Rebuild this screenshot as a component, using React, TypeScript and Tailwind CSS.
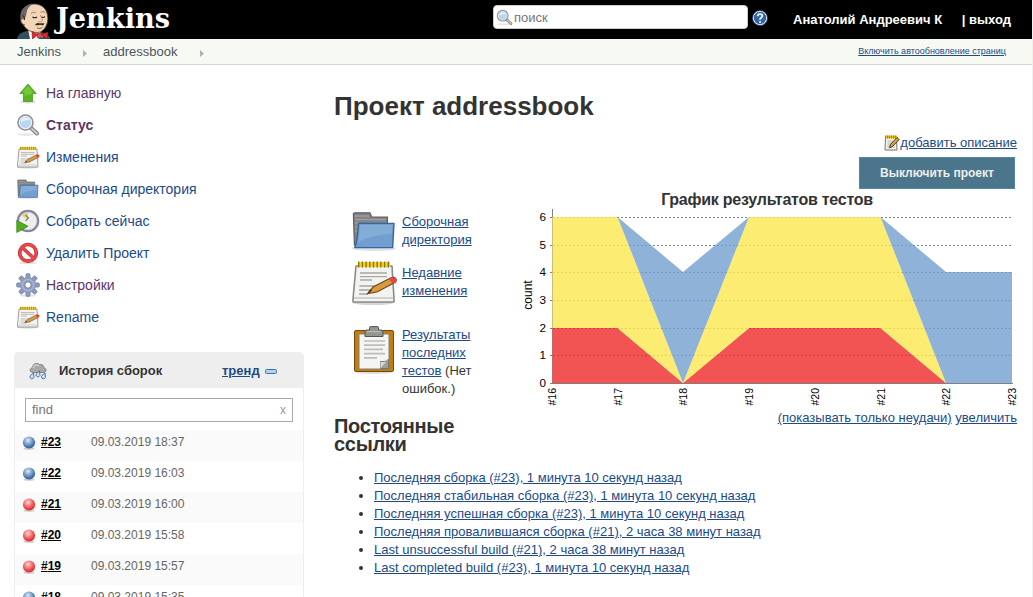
import React from "react";

const linkClass = "text-[#204a87] underline";

function Butler() {
  return (
    <svg width="34" height="36" viewBox="0 0 34 36" className="block">
      <path d="M0 36 C1 31 5 29 10 28 L26 29.500 C29 30.500 32 32 33.500 36Z" fill="#335061" />
      <path d="M11 26 L23 29 L26 34 L20 36 L13 36Z" fill="#f5f5f5" />
      <path d="M5 18 C3 7 9 1 17 1 C25 1 30 6 30.500 13 C32 19 28 29 21 29.500 C13 29.500 7 26 5 18Z" fill="#f0d6b7" stroke="#5b4a40" strokeWidth=".8" />
      <path d="M4 19 C2 12 4 5 10 2.500 C12 1.300 14 1 16 1 C12 3 10 6 9.500 10 C9.300 13 8 14 7.500 17 Z" fill="#6b6765" />
      <path d="M5.500 12 C7 13 8 15 7.500 17" fill="none" stroke="#222" strokeWidth="1" />
      <path d="M7 16 C2.500 14 3 21 8 22" fill="#f0d6b7" stroke="#6d5443" strokeWidth=".9" />
      <path d="M14 10.500 C15.500 9 17.500 9 19 10 M23.500 9.500 C25.500 8 27 8.500 28.500 10" fill="none" stroke="#8a6d58" strokeWidth=".8" />
      <path d="M15.500 14 C17 15 18.500 15 20 14 M24.500 13.800 C25.500 14.600 27 14.600 28 13.600" fill="none" stroke="#25201d" strokeWidth="1.100" />
      <path d="M23.500 12 C24.500 16 26.500 17 24.500 18.500 C23.500 19.500 22 19 21.500 18.500" fill="none" stroke="#b08462" strokeWidth=".9" />
      <path d="M18 22 C19.500 19.500 21.500 19.800 23 20.500 C25 19.800 26.500 20.600 27.500 20.400 C27 22.500 24.500 22.300 23 21.800 C21 22.500 19.500 22.500 18 22Z" fill="#3d2d23" />
      <path d="M20 24.700 C22 26 24.500 25.500 25.500 24.300" fill="none" stroke="#8b4c3a" strokeWidth=".9" />
      <path d="M15 28.500 L21 31.500 L15.500 36 Z M31 29 L24 31.500 L30.500 36 Z" fill="#e8252b" stroke="#7c1517" strokeWidth=".6" />
      <path d="M20.500 30.500 H24.500 L25 34.500 L20.500 34.500Z" fill="#f04a47" stroke="#7c1517" strokeWidth=".6" />
    </svg>
  );
}

function ArrowUp() {
  return (
    <svg width="24" height="24" viewBox="0 0 24 24">
      <ellipse cx="12" cy="20.800" rx="8" ry="1.600" fill="#ddd" />
      <path d="M12 3 L20.200 12.500 H16.500 V20.500 H7.500 V12.500 H3.800 Z" fill="#57b51f" stroke="#4a9c1c" strokeWidth=".8" />
      <path d="M12 4.800 L17.500 11.300 H15.500 V14 C12 13 10 14 8.500 16 V11.300 H6.200 Z" fill="#8bdc55" opacity=".5" />
    </svg>
  );
}

function Magnifier({ size = 24 }: { size?: number }) {
  return (
    <svg width={size} height={size} viewBox="0 0 24 24" className="block">
      <ellipse cx="10" cy="21.500" rx="9" ry="1.500" fill="#e8e8e8" />
      <path d="M15.500 15.500 L21 20.500" stroke="#777" strokeWidth="4" strokeLinecap="round" />
      <path d="M15.500 15.500 L21 20.500" stroke="#ccc" strokeWidth="2" strokeLinecap="round" />
      <circle cx="9.500" cy="9.500" r="7.200" fill="#b9d6f3" stroke="#8e8e8e" strokeWidth="2.200" />
      <circle cx="9.500" cy="9.500" r="6.200" fill="#b9d6f3" stroke="#f4f4f4" strokeWidth="1.100" />
      <path d="M5 9.500 C4.500 4.500 11.500 3 14 7.500 C10.500 7 7 7.500 5 9.500Z" fill="#e8f3fd" />
    </svg>
  );
}

function Notepad({ size = 24 }: { size?: number }) {
  return (
    <svg width={size} height={size} viewBox="0 0 24 24" className="block">
      <ellipse cx="11.500" cy="22.500" rx="10" ry="1" fill="#d5d5d5" />
      <path d="M3 4 H21 L22 20.500 V22 H1.500 V20.500 Z" fill="#f3f3f2" stroke="#8a8a86" strokeWidth=".8" strokeLinejoin="round" />
      <path d="M2 20 H21.600" stroke="#c5c5c2" strokeWidth=".8" />
      <path d="M5 7.500 H18.500 M5 9.300 H18.500 M5 11 H11 M4.700 14 H14 M4.500 16 H14 M4.500 18 H9" stroke="#a7a7a4" strokeWidth=".7" />
      <path d="M4 3.300 H20" stroke="#f4d42c" strokeWidth="2.600" />
      <path d="M4 3.300 H20" stroke="#8b7708" strokeWidth="3" strokeDasharray=".7 1.150" />
      <path d="M8.800 17.800 L11.500 14.500 L20.500 9.900 C22.700 9.300 23.700 10.500 22.800 12 L13.500 17 Z" fill="#d99b42" stroke="#744a16" strokeWidth=".6" />
      <path d="M20.500 9.900 C22.700 9.300 23.700 10.500 22.800 12 L21.300 12.900 L19.500 10.400Z" fill="#ec4545" />
      <path d="M8.800 17.800 L11.200 16.100 L9.900 16.100Z" fill="#222" />
    </svg>
  );
}

function Folder({ size = 24 }: { size?: number }) {
  return (
    <svg width={size} height={size} viewBox="0 0 24 24" className="block">
      <ellipse cx="12" cy="20.700" rx="11" ry="1.300" fill="#e2e2e2" />
      <path d="M1.700 3.600 Q1.700 2.900 2.400 2.900 H10 L10.800 5 H18.700 V19 H2.200 Z" fill="#858585" stroke="#5e5e5e" strokeWidth=".6" />
      <path d="M2.500 4.500 H9.500 M2.500 6.300 H18 M2.500 8 H4.500 M2.500 10 H4 M2.500 12 H3.800" stroke="#a5a5a5" strokeWidth=".5" />
      <path d="M4.300 8.200 H22 L21.300 20.300 H2.400 C3.500 18 4 12 4.300 8.200 Z" fill="#729fcf" stroke="#3465a4" strokeWidth=".7" strokeLinejoin="round" />
      <path d="M5 9 H21.200 L20.900 13.500 C14 13.500 8 15.500 4.200 17.500 Z" fill="#9abce1" opacity=".45" />
    </svg>
  );
}

function ClockPlay() {
  return (
    <svg width="24" height="24" viewBox="0 0 24 24">
      <circle cx="12" cy="12" r="10.200" fill="#eeeeea" stroke="#8383a0" strokeWidth="2.200" />
      <circle cx="12" cy="12" r="8.900" fill="none" stroke="#c4c4cd" strokeWidth=".7" />
      <path d="M12 11 L5.500 6.500 A8.500 8.500 0 0 1 12 3.500Z" fill="#ead27a" />
      <path d="M9.500 6 L12.500 9 L9.500 12" stroke="#444" strokeWidth="1" fill="none" />
      <path d="M.8 11.500 L12 17.300 L.8 23.500Z" fill="#4fae22" stroke="#368812" strokeWidth=".8" />
    </svg>
  );
}

function Forbidden() {
  return (
    <svg width="24" height="24" viewBox="0 0 24 24">
      <ellipse cx="12" cy="21.900" rx="9" ry="1.300" fill="#e0e0e0" />
      <circle cx="12" cy="11.800" r="8.300" fill="#fafafa" stroke="#c62828" strokeWidth="3.600" />
      <path d="M6.200 6.400 L17.800 17.200" stroke="#c62828" strokeWidth="3.400" />
      <circle cx="12" cy="11.800" r="8.300" fill="none" stroke="#e8484b" strokeWidth="2.400" />
      <path d="M6.200 6.400 L17.800 17.200" stroke="#e8484b" strokeWidth="2.300" />
    </svg>
  );
}

const gearTeeth = [0, 45, 90, 135, 180, 225, 270, 315];

function Gear() {
  return (
    <svg width="24" height="24" viewBox="0 0 24 24">
      <ellipse cx="12" cy="22.500" rx="8" ry="1.300" fill="#e2e2e2" />
      <g fill="#8d9bbd" stroke="#6c7ba3" strokeWidth=".7">
        {gearTeeth.map((a) => (
          <path key={a} d="M9.800 5.500 L10.100 1 Q12 0 13.900 1 L14.200 5.500Z" transform={`rotate(${a} 12 12)`} />
        ))}
        <circle cx="12" cy="12" r="8" stroke="none" />
      </g>
      <circle cx="12" cy="12" r="5.600" fill="none" stroke="#a9b5d0" strokeWidth="1.500" />
      <circle cx="12" cy="12" r="3.100" fill="#fff" stroke="#6c7ba3" strokeWidth=".8" />
    </svg>
  );
}

function Clipboard() {
  return (
    <svg width="48" height="48" viewBox="0 0 48 48" className="block">
      <ellipse cx="24" cy="46.500" rx="18" ry="1.500" fill="#ddd" />
      <rect x="4.500" y="4.500" width="39" height="41" rx="1.500" fill="#c17d11" stroke="#754a08" />
      <path d="M9 8 H39 V43 H9Z" fill="#f5f5f4" stroke="#85847d" />
      <path d="M14 15 H35 M14 19.200 H35 M14 23.400 H33 M14 27.600 H35 M14 31.800 H27" stroke="#bcbcb9" strokeWidth="1.700" />
      <path d="M30.500 42.500 V35.500 H33 C36 35.500 38 34.500 38.500 33 V42.500Z" fill="#9e9e9b" stroke="#666" strokeWidth=".8" />
      <path d="M30.500 42.500 L38.500 33 C38 35.500 36 36 30.500 36Z" fill="#d7d7d4" />
      <path d="M15 10.500 V5.500 Q15 4 17 4 H19.500 V1.500 Q19.500 .6 20.500 .6 H27.500 Q28.500 .6 28.500 1.500 V4 H31 Q33 4 33 5.500 V10.500Z" fill="#94968f" stroke="#55574f" />
      <path d="M17 5.700 H31" stroke="#bec0b9" />
    </svg>
  );
}

function Rain() {
  return (
    <svg width="18" height="18" viewBox="0 0 18 18" className="block">
      <path d="M3.500 10.500 C.2 10 .5 6 3.500 5.700 C3.500 1 9 .3 10.500 2.800 C13.500 1.700 15 4 14.800 5.700 C18.200 6.500 17.500 10.500 14.500 10.500Z" fill="#a8a8a5" stroke="#7b7b78" strokeWidth=".9" />
      <path d="M4 6 C5 3 8 2 10 4" stroke="#d0d0cc" fill="none" strokeWidth="1.500" />
      {[3, 9, 14.500].map((x, i) => (
        <g key={x} transform={`translate(${x} ${i === 1 ? 12 : 14})`}>
          <path d="M1.500 -3 L1.800 0 A2 2 0 1 1 -1.500 -.5Z" fill="#d3e4f5" stroke="#3465a4" strokeWidth=".9" />
        </g>
      ))}
    </svg>
  );
}

function Ball({ red }: { red: boolean }) {
  return (
    <svg width="14" height="14" viewBox="0 0 14 14" className="block">
      <defs>
        <radialGradient id={red ? "ball-red" : "ball-blue"} cx="42%" cy="32%" r="65%">
          <stop offset="0" stopColor={red ? "#ffdada" : "#dfeaf6"} />
          <stop offset=".55" stopColor={red ? "#f56a6a" : "#7299c6"} />
          <stop offset="1" stopColor={red ? "#e32626" : "#2f5f9f"} />
        </radialGradient>
      </defs>
      <ellipse cx="7" cy="12.500" rx="5.500" ry="1.300" fill="#ccc" />
      <circle cx="7" cy="6.500" r="6.100" fill={red ? "url(#ball-red)" : "url(#ball-blue)"} />
    </svg>
  );
}

function NoteEdit() {
  return (
    <svg width="16" height="16" viewBox="0 0 16 16" className="block">
      <path d="M1.500 2.500 H12.500 L13 15 H1Z" fill="#f1f1ef" stroke="#73736f" />
      <path d="M3.500 6 H9 M3.500 8 H8 M3.500 10 H6.500 M3.500 12 H11" stroke="#aaa" strokeWidth=".8" />
      <path d="M1 2 H13" stroke="#e4bd17" strokeWidth="3" />
      <path d="M1 2 H13" stroke="#8b7708" strokeWidth="3" strokeDasharray=".7 1.300" />
      <path d="M5.500 12.800 L6.600 9.300 L13 2.500 L15.200 4.500 L8.800 11.200Z" fill="#d8a14b" stroke="#3f2a0b" strokeWidth=".9" />
    </svg>
  );
}

const tasks = [
  { label: "На главную", icon: <ArrowUp />, cls: "text-[#5c3566]" },
  { label: "Статус", icon: <Magnifier />, cls: "text-[#5c3566] font-bold" },
  { label: "Изменения", icon: <Notepad />, cls: "text-[#204a87]" },
  { label: "Сборочная директория", icon: <Folder />, cls: "text-[#204a87]" },
  { label: "Собрать сейчас", icon: <ClockPlay />, cls: "text-[#204a87]" },
  { label: "Удалить Проект", icon: <Forbidden />, cls: "text-[#204a87]" },
  { label: "Настройки", icon: <Gear />, cls: "text-[#5c3566]" },
  { label: "Rename", icon: <Notepad />, cls: "text-[#204a87]" },
];

const builds = [
  { id: 23, time: "09.03.2019 18:37", red: false },
  { id: 22, time: "09.03.2019 16:03", red: false },
  { id: 21, time: "09.03.2019 16:00", red: true },
  { id: 20, time: "09.03.2019 15:58", red: true },
  { id: 19, time: "09.03.2019 15:57", red: true },
  { id: 18, time: "09.03.2019 15:35", red: false },
];

const permalinks = [
  "Последняя сборка (#23), 1 минута 10 секунд назад",
  "Последняя стабильная сборка (#23), 1 минута 10 секунд назад",
  "Последняя успешная сборка (#23), 1 минута 10 секунд назад",
  "Последняя провалившаяся сборка (#21), 2 часа 38 минут назад",
  "Last unsuccessful build (#21), 2 часа 38 минут назад",
  "Last completed build (#23), 1 минута 10 секунд назад",
];

const gridY = [174.5, 146.5, 119.5, 91.5, 63.5, 36.5, 8.5];
const gridX = [35, 100.5, 166, 232, 298, 363.5, 429, 495];
const failed = [2, 2, 0, 2, 2, 2, 0, 0];
const skipped = [6, 6, 0, 6, 6, 6, 0, 0];
const total = [6, 6, 4, 6, 6, 6, 4, 4];

function area(top: number[], bottom: number[]) {
  const up = top.map((v, i) => `${gridX[i]},${gridY[v] - 0.5}`);
  const down = bottom.map((v, i) => `${gridX[i]},${gridY[v] - 0.5}`).reverse();
  return [...up, ...down].join(" ");
}

function TrendChart() {
  const zero = failed.map(() => 0);
  return (
    <svg width="500" height="200" viewBox="0 0 500 200" className="block shrink-0 overflow-visible font-['Liberation_Sans',sans-serif]">
      {gridY.slice(1).map((y) => (
        <path key={y} d={`M36 ${y} H494`} stroke="#808080" strokeDasharray="2 2" shapeRendering="crispEdges" />
      ))}
      <g opacity=".8">
        <polygon points={area(failed, zero)} fill="#ef2929" />
        <polygon points={area(skipped, failed)} fill="#fce94f" />
        <polygon points={area(total, skipped)} fill="#729fcf" />
      </g>
      <path d="M35.500 0 V174.500" stroke="#808080" opacity=".4" />
      <path d="M35.500 0 V8 M35 174.500 H496" stroke="#808080" />
      {gridY.map((y, v) => (
        <g key={y}>
          <path d={`M33 ${y} H35`} stroke="#808080" />
          <text x="22.500" y={y + 3.5} fontSize="10" textLength="6.500" lengthAdjust="spacingAndGlyphs">{v}</text>
        </g>
      ))}
      {gridX.map((x, i) => (
        <text key={x} transform={`translate(${x + 4} 179) rotate(-90)`} fontSize="10" textAnchor="end" textLength="17.500" lengthAdjust="spacingAndGlyphs">
          #{16 + i}
        </text>
      ))}
      <text transform="translate(15 86) rotate(-90)" fontSize="12" textAnchor="middle">count</text>
    </svg>
  );
}

function Crumb({ label }: { label: string }) {
  return (
    <>
      <span>{label}</span>
      <svg width="4" height="7" viewBox="0 0 4 7" className="mt-[3px] mr-4 ml-[22px]">
        <path d="M0 0 L4 3.500 L0 7Z" fill="#b0b0b0" />
      </svg>
    </>
  );
}

export default function App() {
  return (
    <div className="flex h-[597px] w-[1033px] flex-col overflow-hidden border-r border-[#f0f0f0] bg-white font-['Liberation_Sans',Arial,sans-serif] text-[13px] text-[#333]">
      <header className="flex h-[39px] shrink-0 bg-black text-white">
        <div className="flex w-[493px] pt-[3px] pl-[17px]">
          <Butler />
          <svg width="130" height="36" viewBox="0 0 130 36" className="block overflow-visible">
            <text x="5" y="24.500" fontSize="28" fontWeight="700" fill="#fff" textLength="114" lengthAdjust="spacingAndGlyphs" className="font-['DejaVu_Serif',serif]">Jenkins</text>
          </svg>
        </div>
        <div className="mt-[5px] flex h-6 w-[255px] items-center rounded-[4px] border border-[#ccc] bg-white pl-[2px] text-[13px] text-[#757575]">
          <Magnifier size={17} />
          <span className="mt-px ml-px">поиск</span>
        </div>
        <svg width="16" height="16" viewBox="0 0 16 16" className="mt-[10px] ml-1">
          <circle cx="8" cy="8" r="6.800" fill="#3465a4" stroke="#fff" strokeWidth="1.100" />
          <circle cx="8" cy="8" r="7.500" fill="none" stroke="#204a87" strokeWidth=".7" />
          <path d="M5.700 6.200 C5.700 3.200 10.500 3.400 10.300 6 C10.200 7.600 8 7.700 8 9.700" stroke="#fff" strokeWidth="1.700" fill="none" />
          <circle cx="8" cy="11.900" r="1" fill="#fff" />
        </svg>
        <div className="mt-[11px] ml-[25px] flex w-[218px] justify-between text-[13px] leading-[17px] font-bold whitespace-nowrap">
          <span>Анатолий Андреевич К</span>
          <span>| выход</span>
        </div>
      </header>

      <nav className="flex h-[26px] shrink-0 items-center border-b border-[#d3d7cf] bg-[#f6faf2] pr-[26px] pl-[17px] text-[13px] text-[#4d545d]">
        <Crumb label="Jenkins" />
        <Crumb label="addressbook" />
        <a className={`mt-px ml-auto text-[9px] ${linkClass}`}>Включить автообновление страниц</a>
      </nav>

      <div className="flex min-h-0 grow">
        <aside className="w-[334px] shrink-0 pt-3 pl-[14px]">
          <ul className="pl-[2px] text-[14px]">
            {tasks.map((t) => (
              <li key={t.label} className="flex h-8 items-center gap-[6px]">
                {t.icon}
                <span className={t.cls}>{t.label}</span>
              </li>
            ))}
          </ul>

          <section className="mt-[19px] w-[290px] overflow-hidden rounded-t-[4px] border border-[#eee]">
            <div className="flex h-[35px] items-center bg-[#eee] pl-[14px] font-bold">
              <Rain />
              <span className="ml-[12px] w-[163px] text-[13px]">История сборок</span>
              <a className={linkClass}>тренд</a>
              <svg width="12" height="5" viewBox="0 0 12 5" className="mt-[1px] ml-[5px]">
                <rect x=".5" y=".5" width="11" height="4" rx="1" fill="#b3d0ec" stroke="#3d73ad" />
              </svg>
            </div>
            <div className="px-[10px] pt-[10px] pb-2">
              <div className="flex h-6 items-center justify-between border border-[#a9a9a9] px-[6px] text-[#757575]">
                <span>find</span>
                <span className="text-[12px] text-[#999]">x</span>
              </div>
            </div>
            {builds.map((b) => (
              <div key={b.id} className="flex h-[31px] items-start bg-white pl-[7px] nth-[2n+3]:bg-[#fafafa]">
                <div className="mt-[6px]"><Ball red={b.red} /></div>
                <a className="mt-1 ml-[5px] w-[50px] text-[12px] leading-4 font-bold text-black underline">#{b.id}</a>
                <span className="mt-1 text-[12px] leading-4 text-[#666]">{b.time}</span>
              </div>
            ))}
          </section>
        </aside>

        <main className="w-[683px] shrink-0 pt-[26px]">
          <h1 className="text-[26px] leading-[30px] font-bold">Проект addressbook</h1>
          <div className="mt-3 flex justify-between">
            <div className="w-[150px] pt-20">
              <div className="flex h-[51px] pl-4">
                <div className="-mt-[6px] mr-1 shrink-0"><Folder size={48} /></div>
                <a className={`leading-[18px] ${linkClass}`}>Сборочная директория</a>
              </div>
              <div className="flex h-[62px] pl-4">
                <div className="-mt-[6px] mr-1 shrink-0"><Notepad size={48} /></div>
                <a className={`leading-[18px] ${linkClass}`}>Недавние изменения</a>
              </div>
              <div className="flex h-[91px] pl-4">
                <div className="mr-1 shrink-0"><Clipboard /></div>
                <p className="leading-[18px]"><a className={linkClass}>Результаты последних тестов</a> (Нет ошибок.)</p>
              </div>
              <h2 className="text-[20px] leading-[18px] font-bold tracking-[-0.3px]">Постоянные ссылки</h2>
            </div>

            <div className="flex w-[500px] flex-col items-end">
              <div className="flex h-[24px] items-center pb-[5px]">
                <NoteEdit />
                <a className={linkClass}>добавить описание</a>
              </div>
              <button className="mr-[2px] h-8 w-[156px] border border-[#5289a0] bg-[#4b758b] text-[12px] font-bold text-[#eee]">Выключить проект</button>
              <div className="h-5 self-stretch text-center text-[16px] leading-[22px] font-bold tracking-[-0.25px]">График результатов тестов</div>
              <TrendChart />
              <div className="leading-[18px]">
                <a className={linkClass}>(показывать только неудачи)</a> <a className={linkClass}>увеличить</a>
              </div>
            </div>
          </div>
          <ul className="mt-4 list-disc pl-10 leading-[18px]">
            {permalinks.map((p) => (
              <li key={p}><a className={linkClass}>{p}</a></li>
            ))}
          </ul>
        </main>
      </div>
    </div>
  );
}
